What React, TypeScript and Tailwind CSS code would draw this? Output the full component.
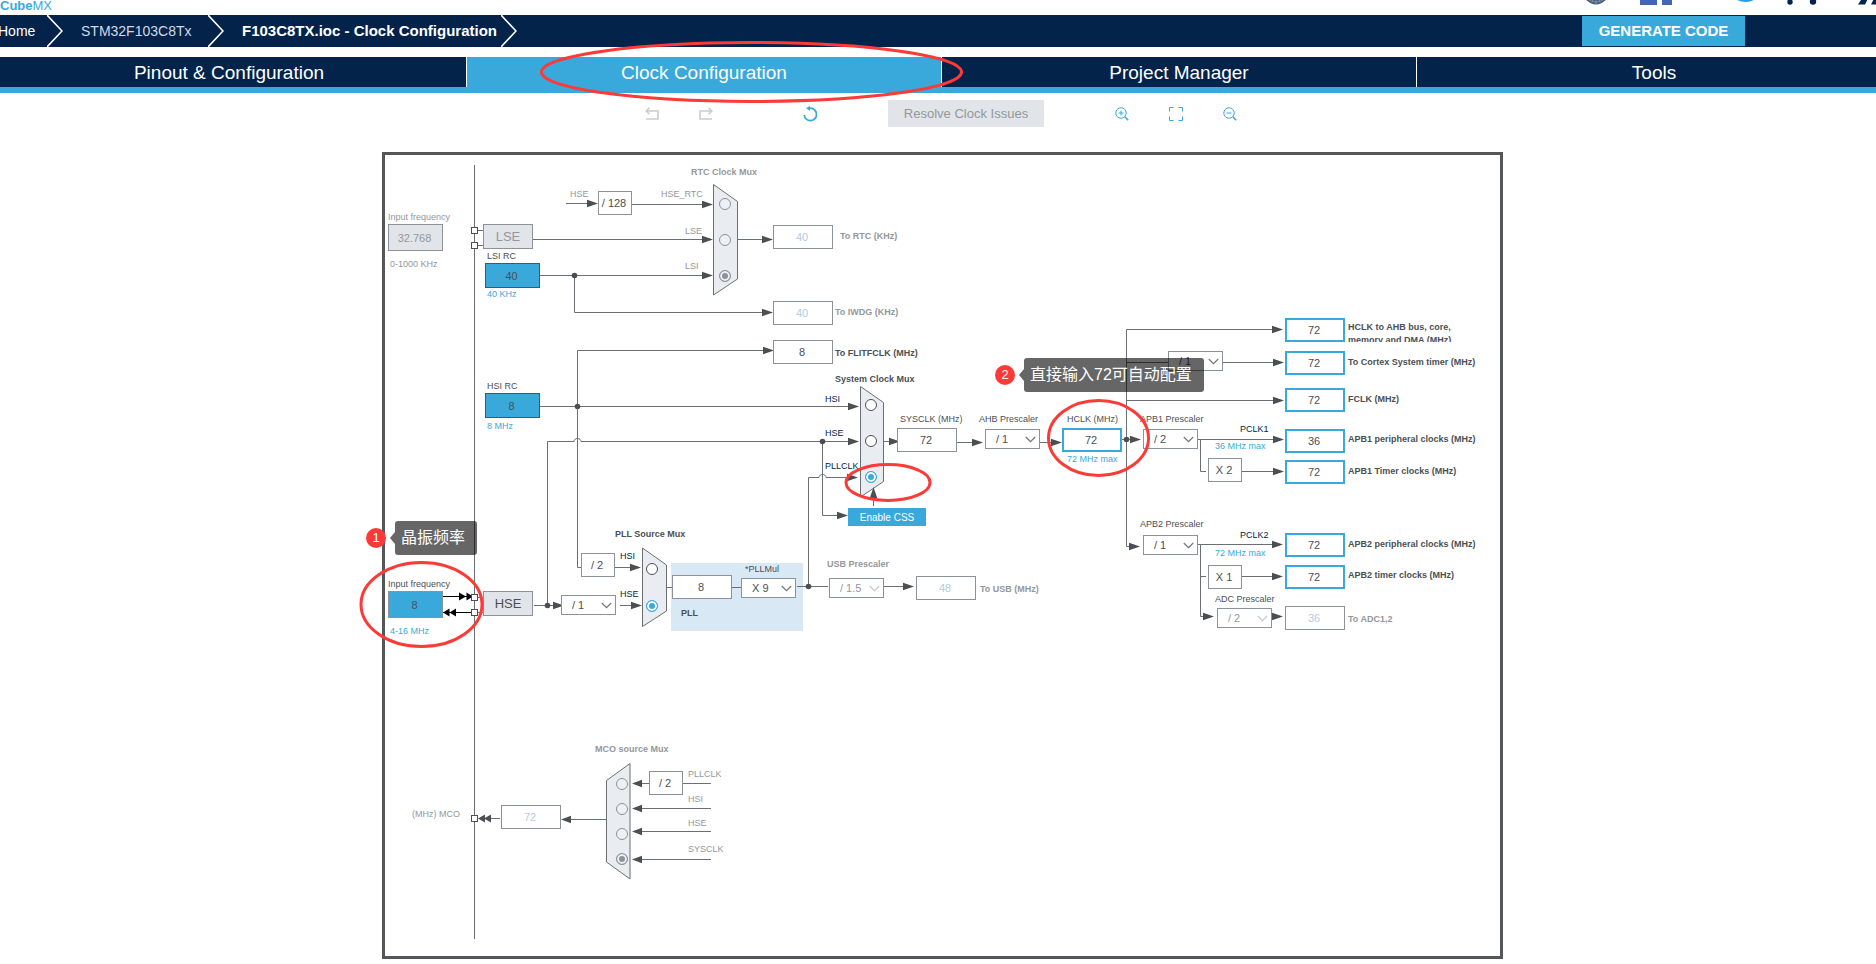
import type { ReactNode } from "react";
import clsx from "clsx";

type Tone = "dark" | "muted" | "navy" | "blue";

const TEXT_TONES: Record<Tone, string> = {
  dark: "text-[#4b4f54]",
  muted: "text-[#94979b]",
  navy: "text-[#03234b]",
  blue: "text-[#39a9dc]",
};

const BOX_TONES = {
  plain: "h-6 w-[60px] border border-[#8c9299] bg-white text-[#4b4f54]",
  faded: "h-6 w-[60px] border border-[#8c9299] bg-white text-[#b4cce4]",
  active: "h-6 w-[60px] border-2 border-[#39a9dc] bg-white text-[#4b4f54]",
  source: "h-[25px] w-[55px] border border-[#4b5560] bg-[#39a9dc] text-[#4b4f54]",
  crystal: "h-[27px] w-[55px] border border-[#8c9299] bg-[#39a9dc] text-[#4b4f54]",
  locked: "h-[27px] w-[55px] border border-[#8c9299] bg-[#e1e5e9] text-[#94979b]",
};

function Caption({
  at,
  tone = "dark",
  bold = false,
  htmlFor,
  children,
}: {
  at: string;
  tone?: Tone;
  bold?: boolean;
  htmlFor?: string;
  children: ReactNode;
}) {
  const className = clsx(
    "absolute text-[9px] leading-3 whitespace-nowrap",
    TEXT_TONES[tone],
    bold && "font-bold",
    at,
  );

  if (htmlFor) {
    return (
      <label className={className} htmlFor={htmlFor}>
        {children}
      </label>
    );
  }

  return <span className={className}>{children}</span>;
}

function ValueBox({
  id,
  at,
  value,
  tone = "plain",
  label,
}: {
  id: string;
  at: string;
  value: string;
  tone?: keyof typeof BOX_TONES;
  label?: string;
}) {
  return (
    <input
      aria-label={label}
      className={clsx("absolute pr-0.5 text-center text-[11px] outline-none", BOX_TONES[tone], at)}
      defaultValue={value}
      id={id}
      type="text"
    />
  );
}

function Factor({ at, children }: { at: string; children: ReactNode }) {
  return (
    <div
      className={clsx(
        "absolute flex h-6 w-[34px] items-center justify-center border border-[#8c9299] bg-white pr-0.5 text-[11px] whitespace-nowrap text-[#4b4f54]",
        at,
      )}
    >
      {children}
    </div>
  );
}

function Prescaler({
  id,
  at,
  options,
  label,
  disabled = false,
}: {
  id: string;
  at: string;
  options: string[];
  label?: string;
  disabled?: boolean;
}) {
  return (
    <div className={clsx("absolute h-5 w-[55px]", at)}>
      <select
        aria-label={label}
        className={clsx(
          "block h-full w-full appearance-none border border-[#8c9299] bg-white pl-2.5 text-[11px] opacity-100 outline-none",
          disabled ? "text-[#94979b]" : "text-[#4b4f54]",
        )}
        disabled={disabled}
        id={id}
      >
        {options.map((option) => (
          <option key={option}>{option}</option>
        ))}
      </select>
      <svg
        className="pointer-events-none absolute top-[7px] right-1 h-[7px] w-[11px]"
        fill="none"
        stroke={disabled ? "#c3c7cb" : "#6f757b"}
        strokeWidth="1.2"
        viewBox="0 0 11 7"
      >
        <path d="M.8 1l4.7 4.6L10.2 1" />
      </svg>
    </div>
  );
}

function MuxRadio({
  at,
  group,
  label,
  checked = false,
  disabled = false,
}: {
  at: string;
  group: string;
  label: string;
  checked?: boolean;
  disabled?: boolean;
}) {
  return (
    <input
      aria-label={label}
      className={clsx(
        "absolute h-3 w-3 appearance-none rounded-full border",
        disabled
          ? "border-[#8c9299] bg-[#eef1f4] checked:bg-[#8c9299] checked:shadow-[inset_0_0_0_2px_#eef1f4]"
          : "border-[#4b4f54] bg-white checked:border-[#39a9dc] checked:bg-[#39a9dc] checked:shadow-[inset_0_0_0_2px_white]",
        at,
      )}
      defaultChecked={checked}
      disabled={disabled}
      name={group}
      type="radio"
    />
  );
}

const WIRES = [
  // pins
  "M89.5 10V784",
  "M93 75.5H98M93 90.5H98M93 442.5H98M93 457.5H98",
  // RTC / IWDG
  "M181 48.5H205M247 49.5H320M148 84.5H320M155 120.5H320",
  "M352 84.5H380M189.5 120.5V157.5H380",
  // HSI
  "M155 251.5H466M192.5 412.5V195.5H380M192.5 412.5H196M230 412.5H248",
  // HSE
  "M149 450.5H171M162.5 450.5V286.5H189C189 282.5 196 282.5 196 286.5H466M235 450.5H249",
  "M437.5 286.5V360.5H454",
  // PLL
  "M281 432.5H287M347 432.5H356M412 431.5H443M499 431.5H521",
  "M423.5 431.5V322.5H434C434 318.5 441 318.5 441 322.5H466",
  "M488.5 351V342",
  // system clock
  "M498 286.5H508M572 287.5H590M655 287.5H670M737 284.5H748",
  "M741.5 391.5V174.5H890M741.5 207.5H783M838 207.5H890M741.5 245.5H890",
  "M741.5 391.5H747",
  // APB1
  "M813 284.5H890M815.5 284.5V316.5H821M857 316.5H890",
  // APB2
  "M813 389.5H890M815.5 389.5V461.5H821M815.5 421.5H821M857 421.5H890M887 461.5H890",
  // MCO
  "M99 663.5H115M184 664.5H221",
  "M254 628.5H264M298 628.5H326M254 653.5H326M254 676.5H326M254 704.5H326",
];

const RIGHT_ARROWS = [
  [213, 48.5], [328, 49.5], [328, 84.5], [328, 120.5], [388, 84.5], [388, 157.5], [389, 195.5],
  [474, 251.5], [474, 286.5], [473, 322.5], [463, 360.5], [179, 450.5], [256, 412.5], [257, 450.5],
  [515, 286.5], [598, 287.5], [677, 287.5], [756, 284.5], [755, 391.5], [529, 431.5],
  [898, 174.5], [899, 207.5], [899, 245.5], [899, 284.5], [899, 316.5], [898, 389.5], [898, 421.5],
  [829, 461.5], [898, 461.5],
];

const LEFT_ARROWS = [
  [176, 664.5], [247, 628.5], [247, 653.5], [247, 676.5], [247, 704.5],
];

const JUNCTIONS = [
  [189.5, 120.5], [192.5, 251.5], [437.5, 286.5], [162.5, 450.5], [423.5, 431.5], [741.5, 284.5],
];

const MUXES = [
  "M328.5 29.5L352.5 46.5V124L328.5 140Z",
  "M475.5 231.5L498.5 247.5V326.5L475.5 342Z",
  "M257.5 393L281.5 410V456L257.5 471.5Z",
  "M245 608.5V724L221.5 707V625.5Z",
];

const PINS = [75.5, 90.5, 442.5, 457.5, 663.5];

function Wiring() {
  return (
    <svg className="absolute inset-0 h-full w-full" fill="none">
      <path d={WIRES.join("")} stroke="#6b6f73" />
      {MUXES.map((d) => (
        <path d={d} fill="#e9edf1" key={d} stroke="#6b6f73" />
      ))}
      <g fill="#4b4f52">
        {RIGHT_ARROWS.map(([x, y]) => (
          <path d={`M${x} ${y}l-11 -3.7v7.4z`} key={`${x}-${y}`} />
        ))}
        {LEFT_ARROWS.map(([x, y]) => (
          <path d={`M${x} ${y}l10 -3.7v7.4z`} key={`${x}-${y}`} />
        ))}
        <path d="M488.5 332l-3.7 11h7.4z" />
        <path d="M93 663.5l7 -4v8zM99 663.5l7 -4v8z" />
        {JUNCTIONS.map(([x, y]) => (
          <circle cx={x} cy={y} key={`${x}-${y}`} r="2.8" />
        ))}
      </g>
      <path d="M58 441.5H86M58 457.5H86" stroke="#000" />
      <path
        d="M81 441.5l-7 -4v8zM88 441.5l-6.5 -4v8zM58 457.5l6.5 -4v8zM64.5 457.5l6.5 -4v8z"
        fill="#000"
      />
      {PINS.map((y) => (
        <rect fill="#fff" height="6" key={y} stroke="#4b4f52" width="6" x="86.5" y={y - 3} />
      ))}
    </svg>
  );
}

function Oscillators() {
  return (
    <>
      <Caption at="left-[3px] top-14" htmlFor="lse-input" tone="muted">
        Input frequency
      </Caption>
      <ValueBox at="left-[3px] top-[69px]" id="lse-input" tone="locked" value="32.768" />
      <Caption at="left-[5px] top-[103px]" tone="muted">
        0-1000 KHz
      </Caption>
      <div className="absolute top-[69px] left-[98px] flex h-[25px] w-[50px] items-center justify-center border border-[#8c9299] bg-[#e1e5e9] text-[13px] text-[#94979b]">
        LSE
      </div>

      <Caption at="left-[102px] top-[95px]" htmlFor="lsi">
        LSI RC
      </Caption>
      <ValueBox at="left-[100px] top-[108px]" id="lsi" tone="source" value="40" />
      <Caption at="left-[102px] top-[133px]" tone="blue">
        40 KHz
      </Caption>

      <Caption at="left-[102px] top-[225px]" htmlFor="hsi">
        HSI RC
      </Caption>
      <ValueBox at="left-[100px] top-[238px]" id="hsi" tone="source" value="8" />
      <Caption at="left-[102px] top-[265px]" tone="blue">
        8 MHz
      </Caption>

      <Caption at="left-[3px] top-[423px]" htmlFor="hse-input">
        Input frequency
      </Caption>
      <ValueBox at="left-[3px] top-[436px]" id="hse-input" tone="crystal" value="8" />
      <Caption at="left-[5px] top-[470px]" tone="blue">
        4-16 MHz
      </Caption>
      <div className="absolute top-[436px] left-[98px] flex h-[25px] w-[50px] items-center justify-center border border-[#8c9299] bg-[#e1e5e9] text-[13px] text-[#4b4f54]">
        HSE
      </div>
    </>
  );
}

function RtcSection() {
  return (
    <>
      <Caption at="left-[306px] top-[11px]" bold tone="muted">
        RTC Clock Mux
      </Caption>
      <Caption at="left-[185px] top-[33px]" tone="muted">
        HSE
      </Caption>
      <Factor at="left-[213px] top-9">/ 128</Factor>
      <Caption at="left-[276px] top-[33px]" tone="muted">
        HSE_RTC
      </Caption>
      <Caption at="left-[300px] top-[70px]" tone="muted">
        LSE
      </Caption>
      <Caption at="left-[300px] top-[105px]" tone="muted">
        LSI
      </Caption>
      <MuxRadio at="left-[334px] top-[43px]" disabled group="rtc" label="HSE_RTC" />
      <MuxRadio at="left-[334px] top-[79px]" disabled group="rtc" label="LSE" />
      <MuxRadio at="left-[334px] top-[115px]" checked disabled group="rtc" label="LSI" />

      <ValueBox at="left-[388px] top-[70px]" id="rtc" tone="faded" value="40" />
      <Caption at="left-[455px] top-[75px]" bold htmlFor="rtc" tone="muted">
        To RTC (KHz)
      </Caption>
      <ValueBox at="left-[388px] top-[146px]" id="iwdg" tone="faded" value="40" />
      <Caption at="left-[450px] top-[151px]" bold htmlFor="iwdg" tone="muted">
        To IWDG (KHz)
      </Caption>
      <ValueBox at="left-[388px] top-[185px]" id="flitf" value="8" />
      <Caption at="left-[450px] top-[192px]" bold htmlFor="flitf">
        To FLITFCLK (MHz)
      </Caption>
    </>
  );
}

function PllSection() {
  return (
    <>
      <Caption at="left-[230px] top-[373px]" bold>
        PLL Source Mux
      </Caption>
      <Factor at="left-[196px] top-[398px]">/ 2</Factor>
      <Caption at="left-[235px] top-[395px]" tone="navy">
        HSI
      </Caption>
      <Prescaler at="left-[176px] top-[440px]" id="hse-div" label="HSE divider" options={["/ 1", "/ 2"]} />
      <Caption at="left-[235px] top-[433px]" tone="navy">
        HSE
      </Caption>
      <MuxRadio at="left-[261px] top-[408px]" group="pll" label="HSI" />
      <MuxRadio at="left-[261px] top-[445px]" checked group="pll" label="HSE" />

      <ValueBox at="left-[287px] top-[420px]" id="pll-in" label="PLL input" value="8" />
      <Caption at="left-[360px] top-[408px]" htmlFor="pll-mul">
        *PLLMul
      </Caption>
      <Prescaler at="left-[356px] top-[423px]" id="pll-mul" options={["X 9", "X 8", "X 6"]} />
      <Caption at="left-[296px] top-[452px]" bold>
        PLL
      </Caption>

      <Caption at="left-[442px] top-[403px]" bold htmlFor="usb-div" tone="muted">
        USB Prescaler
      </Caption>
      <Prescaler at="left-[444px] top-[423px]" disabled id="usb-div" options={["/ 1.5", "/ 1"]} />
      <ValueBox at="left-[531px] top-[421px]" id="usb" tone="faded" value="48" />
      <Caption at="left-[595px] top-[428px]" bold htmlFor="usb" tone="muted">
        To USB (MHz)
      </Caption>
    </>
  );
}

function SystemSection() {
  return (
    <>
      <Caption at="left-[450px] top-[218px]" bold>
        System Clock Mux
      </Caption>
      <Caption at="left-[440px] top-[238px]" tone="navy">
        HSI
      </Caption>
      <Caption at="left-[440px] top-[272px]" tone="navy">
        HSE
      </Caption>
      <Caption at="left-[440px] top-[305px]" tone="navy">
        PLLCLK
      </Caption>
      <MuxRadio at="left-[480px] top-[244px]" group="sys" label="HSI" />
      <MuxRadio at="left-[480px] top-[280px]" group="sys" label="HSE" />
      <MuxRadio at="left-[480px] top-[316px]" checked group="sys" label="PLLCLK" />
      <button
        className="absolute top-[353px] left-[463px] h-[18px] w-[78px] bg-[#39a9dc] text-[10px] text-white"
        type="button"
      >
        Enable CSS
      </button>

      <Caption at="left-[515px] top-[258px]" htmlFor="sysclk">
        SYSCLK (MHz)
      </Caption>
      <ValueBox at="left-[512px] top-[273px]" id="sysclk" value="72" />
      <Caption at="left-[594px] top-[258px]" htmlFor="ahb-div">
        AHB Prescaler
      </Caption>
      <Prescaler at="left-[600px] top-[274px]" id="ahb-div" options={["/ 1", "/ 2"]} />
      <Caption at="left-[682px] top-[258px]" htmlFor="hclk">
        HCLK (MHz)
      </Caption>
      <ValueBox at="left-[677px] top-[273px]" id="hclk" tone="active" value="72" />
      <Caption at="left-[682px] top-[298px]" tone="blue">
        72 MHz max
      </Caption>
    </>
  );
}

function BusSection() {
  return (
    <>
      <Prescaler at="left-[783px] top-[196px]" id="cortex-div" label="Cortex divider" options={["/ 1", "/ 8"]} />
      <Caption at="left-[755px] top-[258px]" htmlFor="apb1-div">
        APB1 Prescaler
      </Caption>
      <Prescaler at="left-[758px] top-[274px]" id="apb1-div" options={["/ 2", "/ 1"]} />
      <Caption at="left-[855px] top-[268px]" tone="navy">
        PCLK1
      </Caption>
      <Caption at="left-[830px] top-[285px]" tone="blue">
        36 MHz max
      </Caption>
      <Factor at="left-[823px] top-[303px]">X 2</Factor>

      <Caption at="left-[755px] top-[363px]" htmlFor="apb2-div">
        APB2 Prescaler
      </Caption>
      <Prescaler at="left-[758px] top-[380px]" id="apb2-div" options={["/ 1", "/ 2"]} />
      <Caption at="left-[855px] top-[374px]" tone="navy">
        PCLK2
      </Caption>
      <Caption at="left-[830px] top-[392px]" tone="blue">
        72 MHz max
      </Caption>
      <Factor at="left-[823px] top-[410px]">X 1</Factor>
      <Caption at="left-[830px] top-[438px]" htmlFor="adc-div">
        ADC Prescaler
      </Caption>
      <Prescaler at="left-[832px] top-[453px]" disabled id="adc-div" options={["/ 2", "/ 4"]} />

      <ValueBox at="left-[900px] top-[163px]" id="ahb-out" tone="active" value="72" />
      <label
        className="absolute top-[166px] left-[963px] h-[21px] w-[120px] overflow-hidden text-[9px] leading-[13px] font-bold text-[#4b4f54]"
        htmlFor="ahb-out"
      >
        HCLK to AHB bus, core, memory and DMA (MHz)
      </label>
      <ValueBox at="left-[900px] top-[196px]" id="cortex-out" tone="active" value="72" />
      <Caption at="left-[963px] top-[201px]" bold htmlFor="cortex-out">
        To Cortex System timer (MHz)
      </Caption>
      <ValueBox at="left-[900px] top-[233px]" id="fclk-out" tone="active" value="72" />
      <Caption at="left-[963px] top-[238px]" bold htmlFor="fclk-out">
        FCLK (MHz)
      </Caption>
      <ValueBox at="left-[900px] top-[274px]" id="apb1-out" tone="active" value="36" />
      <Caption at="left-[963px] top-[278px]" bold htmlFor="apb1-out">
        APB1 peripheral clocks (MHz)
      </Caption>
      <ValueBox at="left-[900px] top-[305px]" id="apb1-timer" tone="active" value="72" />
      <Caption at="left-[963px] top-[310px]" bold htmlFor="apb1-timer">
        APB1 Timer clocks (MHz)
      </Caption>
      <ValueBox at="left-[900px] top-[378px]" id="apb2-out" tone="active" value="72" />
      <Caption at="left-[963px] top-[383px]" bold htmlFor="apb2-out">
        APB2 peripheral clocks (MHz)
      </Caption>
      <ValueBox at="left-[900px] top-[410px]" id="apb2-timer" tone="active" value="72" />
      <Caption at="left-[963px] top-[414px]" bold htmlFor="apb2-timer">
        APB2 timer clocks (MHz)
      </Caption>
      <ValueBox at="left-[900px] top-[451px]" id="adc-out" tone="faded" value="36" />
      <Caption at="left-[963px] top-[458px]" bold htmlFor="adc-out" tone="muted">
        To ADC1,2
      </Caption>
    </>
  );
}

function McoSection() {
  return (
    <>
      <Caption at="left-[210px] top-[588px]" bold tone="muted">
        MCO source Mux
      </Caption>
      <Caption at="left-[27px] top-[653px]" htmlFor="mco" tone="muted">
        (MHz) MCO
      </Caption>
      <ValueBox at="left-[116px] top-[650px]" id="mco" tone="faded" value="72" />
      <MuxRadio at="left-[231px] top-[623px]" disabled group="mco" label="PLLCLK" />
      <MuxRadio at="left-[231px] top-[648px]" disabled group="mco" label="HSI" />
      <MuxRadio at="left-[231px] top-[673px]" disabled group="mco" label="HSE" />
      <MuxRadio at="left-[231px] top-[698px]" checked disabled group="mco" label="SYSCLK" />
      <Factor at="left-[264px] top-[616px]">/ 2</Factor>
      <Caption at="left-[303px] top-[613px]" tone="muted">
        PLLCLK
      </Caption>
      <Caption at="left-[303px] top-[638px]" tone="muted">
        HSI
      </Caption>
      <Caption at="left-[303px] top-[662px]" tone="muted">
        HSE
      </Caption>
      <Caption at="left-[303px] top-[688px]" tone="muted">
        SYSCLK
      </Caption>
    </>
  );
}

function Note({ at, step, children }: { at: string; step: number; children: ReactNode }) {
  return (
    <div className={clsx("absolute flex items-center", at)}>
      <span className="flex h-5 w-5 items-center justify-center rounded-full bg-[#fc3a37] text-[13px] text-white">
        {step}
      </span>
      <svg className="ml-1 h-3 w-[5px]" viewBox="0 0 5 12">
        <path d="M0 6l5-6v12z" fill="#666" />
      </svg>
      <span className="rounded-[3px] bg-black/60 py-[5px] pr-3 pl-1.5 text-[16px] leading-6 whitespace-nowrap text-white">
        {children}
      </span>
    </div>
  );
}

function ClockCanvas() {
  return (
    <section
      aria-label="Clock tree"
      className="relative h-[807px] w-[1121px] shrink-0 border-[3px] border-[#54575a]"
    >
      <div className="absolute top-[408px] left-[286px] h-[68px] w-[132px] bg-[#d9e8f5]" />
      <Wiring />
      <Oscillators />
      <RtcSection />
      <PllSection />
      <SystemSection />
      <BusSection />
      <McoSection />

      <svg
        className="pointer-events-none absolute inset-0 h-full w-full overflow-visible"
        fill="none"
        stroke="#fc3a37"
        strokeWidth="3"
      >
        <ellipse cx="36.5" cy="449.5" rx="60.5" ry="42" />
        <ellipse cx="503" cy="327.5" rx="42" ry="18" />
        <ellipse cx="713.5" cy="283" rx="50" ry="37.5" />
      </svg>
      <Note at="left-[-19px] top-[366px]" step={1}>
        晶振频率
      </Note>
      <Note at="left-[610px] top-[203px]" step={2}>
        直接输入72可自动配置
      </Note>
    </section>
  );
}

function CrumbArrow() {
  return (
    <svg className="h-8 w-4 shrink-0" fill="none" stroke="#fff" strokeWidth="1.6" viewBox="0 0 16 32">
      <path d="M0 0l15 16L0 32" />
    </svg>
  );
}

function TopStrip() {
  return (
    <div className="flex h-[15px] items-end justify-between overflow-hidden pr-4 pl-2">
      <div className="text-[13px] leading-[18px] text-[#39a9dc]">
        <strong>Cube</strong>MX
      </div>
      <svg className="h-[15px] w-[292px] shrink-0" viewBox="0 0 292 15">
        <circle cx="12" cy="-8" fill="#4a5f7e" r="12.5" />
        <path d="M4 -1a12 12 0 0 0 16 0M7 -4l2 6M12 -4v8M17 -4l-2 6" fill="none" stroke="#8b9bb0" strokeWidth=".7" />
        <path d="M56 -10H73V5H56zM78 -10H88V5H78z" fill="#4267b2" />
        <path d="M153 0q9 4 17 0z" fill="#1da1f2" />
        <circle cx="206" cy="2" fill="#03234b" r="2.7" />
        <circle cx="229" cy="1.5" fill="#03234b" r="3.2" />
        <path d="M274 4.5l4 -6h6l-3 6zM287 4.5l3 -6h6v6z" fill="#03234b" />
      </svg>
    </div>
  );
}

const TABS = ["Pinout & Configuration", "Clock Configuration", "Project Manager", "Tools"];

function Toolbar() {
  return (
    <div className="flex items-center justify-center pt-[7px] pr-0.5 pb-[25px] text-[#39a9dc]">
      <button aria-label="Undo" className="mr-10 text-[#c9ccce]" type="button">
        <svg className="h-3.5 w-3.5" fill="none" stroke="currentColor" strokeWidth="1.6" viewBox="0 0 14 14">
          <path d="M1 4H13V12H1M4.5 .8L1.2 4L4.5 7.2" />
        </svg>
      </button>
      <button aria-label="Redo" className="mr-[90px] text-[#c9ccce]" type="button">
        <svg className="h-3.5 w-3.5" fill="none" stroke="currentColor" strokeWidth="1.6" viewBox="0 0 14 14">
          <path d="M13 4H1V12H13M9.5 .8L12.800 4L9.5 7.2" />
        </svg>
      </button>
      <button aria-label="Reset" className="mr-[71px]" type="button">
        <svg className="h-4 w-3.5" fill="none" stroke="currentColor" strokeWidth="1.8" viewBox="0 0 14 16">
          <path d="M6 2.200H7.500A6.200 6.200 0 1 1 1.200 9" />
          <path d="M3 2.300L7 0V4.800Z" fill="currentColor" stroke="none" />
        </svg>
      </button>
      <button className="h-[27px] w-[156px] bg-[#e1e5e9] text-[13px] text-[#94979b]" type="button">
        Resolve Clock Issues
      </button>
      <button aria-label="Zoom in" className="ml-[71px]" type="button">
        <svg className="h-3.5 w-3.5" fill="none" stroke="currentColor" viewBox="0 0 14 14">
          <circle cx="6" cy="6" r="5.2" />
          <path d="M3.5 6H8.5M6 3.5V8.5" />
          <path d="M9.8 9.8L13.2 13.2" strokeWidth="1.6" />
        </svg>
      </button>
      <button aria-label="Fit" className="ml-10" type="button">
        <svg className="h-3.5 w-3.5" fill="none" stroke="currentColor" viewBox="0 0 14 14">
          <path d="M.5 4.5V.5H4.5M9.5 .5H13.5V4.5M13.5 9.5V13.5H9.5M4.5 13.5H.5V9.5" />
        </svg>
      </button>
      <button aria-label="Zoom out" className="ml-10" type="button">
        <svg className="h-3.5 w-3.5" fill="none" stroke="currentColor" viewBox="0 0 14 14">
          <circle cx="6" cy="6" r="5.2" />
          <path d="M3.5 6H8.5" />
          <path d="M9.8 9.8L13.2 13.2" strokeWidth="1.6" />
        </svg>
      </button>
    </div>
  );
}

export default function App() {
  return (
    <div className="min-h-screen overflow-hidden bg-white font-['Liberation_Sans','Noto_Sans_CJK_SC',sans-serif]">
      <div className="-mr-4 -ml-2">
        <TopStrip />

        <header className="flex h-8 items-center bg-[#03234b] text-[15px] text-white">
          <a className="w-[55px] pl-1.5 text-[14px]" href="#home">
            Home
          </a>
          <CrumbArrow />
          <a className="w-[145px] pl-[18px] text-[14px] text-[#d3dae3]" href="#device">
            STM32F103C8Tx
          </a>
          <CrumbArrow />
          <a className="w-[277px] pl-[18px] font-bold whitespace-nowrap" href="#clock">
            F103C8TX.ioc - Clock Configuration
          </a>
          <CrumbArrow />
          <button
            className="mr-[147px] ml-auto h-[30px] w-[163px] bg-[#39a9dc] font-bold"
            type="button"
          >
            GENERATE CODE
          </button>
        </header>

        <nav className="mt-2.5 grid grid-cols-4 border-b-[6px] border-[#39a9dc]">
          {TABS.map((tab) => {
            const active = tab === "Clock Configuration";

            return (
              <button
                className={clsx(
                  "relative h-[30px] border-r border-white pt-0.5 text-[19px] leading-7 text-white",
                  active ? "bg-[#39a9dc]" : "bg-[#03234b]",
                )}
                key={tab}
                type="button"
              >
                {tab}
                {active && (
                  <svg
                    className="pointer-events-none absolute -top-4 left-[73px] z-10 h-[62px] w-[424px]"
                    fill="none"
                    viewBox="0 0 424 62"
                  >
                    <ellipse cx="211.5" cy="31" rx="210" ry="29.5" stroke="#fc3a37" strokeWidth="3" />
                  </svg>
                )}
              </button>
            );
          })}
        </nav>

        <Toolbar />

        <main className="flex justify-center pb-[5px] pl-px">
          <ClockCanvas />
        </main>
      </div>
    </div>
  );
}
